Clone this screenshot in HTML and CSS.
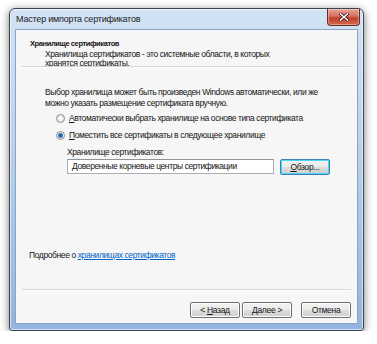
FILE: index.html
```html
<!DOCTYPE html>
<html lang="ru">
<head>
  <meta charset="UTF-8">
  <title>Мастер импорта сертификатов</title>
  <link rel="stylesheet" href="styles.css">
</head>
<body>
  <div class="window">
    <div class="titlebar">
      <span class="title">Мастер импорта сертификатов</span>
      <div class="close">
        <svg width="10" height="8" viewBox="0 0 10 8">
          <path d="M1.5 1 L8.5 7 M8.5 1 L1.5 7" stroke="#3a1010" stroke-width="3" stroke-linecap="square"/>
          <path d="M1.5 1 L8.5 7 M8.5 1 L1.5 7" stroke="#fff" stroke-width="1.6" stroke-linecap="square"/>
        </svg>
      </div>
    </div>

    <div class="client">
      <div class="header">
        <div class="h-title">Хранилище сертификатов</div>
        <div class="h-desc">Хранилища сертификатов - это системные области, в которых<br>хранятся сертификаты.</div>
      </div>
      <div class="sep"></div>

      <div class="content">
        <p class="intro">Выбор хранилища может быть произведен Windows автоматически, или же<br>можно указать размещение сертификата вручную.</p>

        <label class="radio"><span class="dot"></span><span><u>А</u>втоматически выбрать хранилище на основе типа сертификата</span></label>
        <label class="radio"><span class="dot checked"></span><span><u>П</u>оместить все сертификаты в следующее хранилище</span></label>

        <div class="store">
          <div class="store-label">Хранилище сертификатов:</div>
          <div class="store-row">
            <div class="field">Доверенные корневые центры сертификации</div>
            <button class="btn default"><u>О</u>бзор...</button>
          </div>
        </div>
      </div>

      <div class="more">Подробнее о <a href="#">хранилищах сертификатов</a></div>
      <div class="sep"></div>

      <div class="footer">
        <button class="btn">&lt; <u>Н</u>азад</button>
        <button class="btn"><u>Д</u>алее &gt;</button>
        <button class="btn cancel">Отмена</button>
      </div>
    </div>
  </div>
</body>
</html>
```

FILE: styles.css
```css
body {
  margin: 0;
  background-color: #ffffff;
  font-family: 'Liberation Sans', Arial, sans-serif;
  font-size: 8.5px;
  letter-spacing: -0.4px;
  color: #151515;
  white-space: nowrap;
}
.window {
  width: 343px;
  height: 315px;
  margin: 8px 0 0 9px;
  border: 1px solid #3c4450;
  border-radius: 6px 6px 3px 3px;
  background: linear-gradient(#d3e3f5, #bcd2ed 40%, #93b4e0);
  box-shadow: 0 2px 9px rgba(0,0,0,0.55), inset 0 0 0 1px rgba(255,255,255,0.6);
  display: flex;
  flex-direction: column;
  padding: 0 5px 6px 5px;
}
.titlebar {
  height: 20px;
  display: flex;
  align-items: flex-start;
}
.title {
  margin: 5px 0 0 1px;
  font-size: 9px;
  letter-spacing: -0.2px;
  color: #1a1a1a;
  flex: 1;
}
.close {
  width: 31px;
  height: 16px;
  margin-right: -2px;
  border: 1px solid #6b2a22;
  border-top: none;
  border-radius: 0 0 4px 4px;
  background: linear-gradient(#e9a496, #d4705f 45%, #c2402c 55%, #d26a4c);
  box-shadow: inset 0 0 0 1px rgba(255,255,255,0.35);
  display: flex;
  align-items: center;
  justify-content: center;
}
.client {
  flex: 1;
  border: 1px solid #8ba4c4;
  background-color: #f6f6f6;
  display: flex;
  flex-direction: column;
}
.header {
  padding: 9px 0 0 14px;
  height: 27px;
}
.h-title {
  font-weight: bold;
  font-size: 7.5px;
  line-height: 10px;
}
.h-desc {
  margin: 1px 0 0 15px;
  line-height: 9px;
}
.sep {
  margin: 0 6px;
  height: 1px;
  background-color: #d6d6d6;
  border-bottom: 1px solid #ffffff;
}
.content {
  padding: 19px 0 0 29px;
  flex: 1;
}
.intro {
  margin: 0 0 5px 0;
  line-height: 10.5px;
}
.radio {
  display: flex;
  align-items: center;
  gap: 4px;
  margin: 0 0 7px 11px;
  height: 10px;
}
.dot {
  width: 7px;
  height: 7px;
  border: 1px solid #8e8f8f;
  border-radius: 50%;
  background: radial-gradient(#ffffff, #dcdcdc);
}
.dot.checked {
  background: radial-gradient(circle, #1b4f8e 0, #3a7fd0 2px, #e8eef6 3px, #d9d9d9);
}
.store {
  margin: 1px 0 0 22px;
}
.store-label {
  line-height: 10px;
  margin-bottom: 2px;
}
.store-row {
  display: flex;
  gap: 6px;
}
.field {
  width: 201px;
  height: 13px;
  border: 1px solid #abadb3;
  border-top-color: #8e949c;
  background-color: #ffffff;
  padding-left: 4px;
  line-height: 13px;
}
.btn {
  font-family: inherit;
  font-size: 8.5px;
  letter-spacing: -0.3px;
  color: #151515;
  width: 50px;
  height: 16px;
  padding: 0;
  border: 1px solid #707070;
  border-radius: 2px;
  background: linear-gradient(#f2f2f2, #ebebeb 50%, #dddddd 51%, #cfcfcf);
  box-shadow: inset 0 0 0 1px #fcfcfc;
}
.btn.default {
  border-color: #3c7fb1;
  box-shadow: inset 0 0 0 1px #48d8fb;
}
.more {
  padding: 0 0 29px 13px;
  line-height: 10px;
}
.more a {
  color: #0066cc;
}
.footer {
  display: flex;
  justify-content: flex-end;
  gap: 2px;
  padding: 11px 6px 5px 0;
}
.btn.cancel {
  margin-left: 7px;
}
```
